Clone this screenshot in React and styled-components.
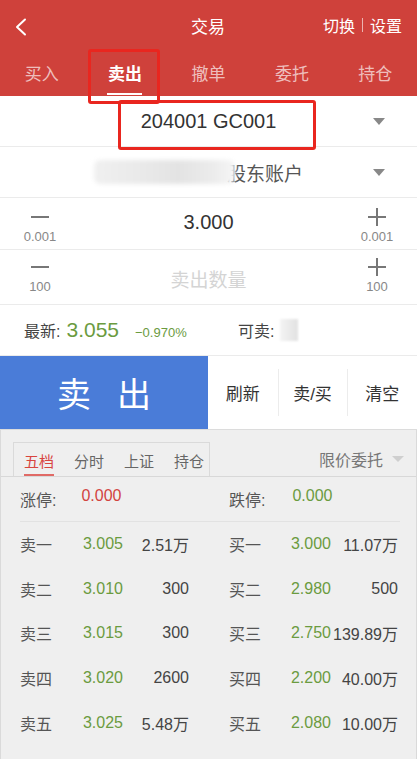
import React from 'react'
import styled, { createGlobalStyle } from 'styled-components'

const GlobalStyle = createGlobalStyle`
  html, body { margin: 0; padding: 0; background: #efefef; }
  body {
    font-family: "Liberation Sans", "Noto Sans CJK SC", sans-serif;
    -webkit-font-smoothing: antialiased;
  }
  * { box-sizing: border-box; }
`

const GREEN = '#6b9b3f'
const RED = '#d2433f'

const Page = styled.div`
  position: relative;
  width: 417px;
  height: 759px;
  overflow: hidden;
  background: #efefef;
  display: flex;
  flex-direction: column;
`

const Header = styled.div`
  background: #cf413b;
  height: 96px;
  display: flex;
  flex-direction: column;
  color: #fff;
`

const TopBar = styled.div`
  height: 50px;
  display: grid;
  grid-template-columns: 1fr auto 1fr;
  align-items: center;
  padding: 0 15px 0 14px;
  svg { display: block; margin-top: 4px; }
`

const Title = styled.div`
  font-size: 17px;
  text-align: center;
`

const RightLinks = styled.div`
  justify-self: end;
  font-size: 16px;
  display: flex;
  align-items: center;
  gap: 7px;
  span.sep {
    width: 1px;
    height: 14px;
    background: rgba(255,255,255,0.6);
  }
`

const Tabs = styled.div`
  flex: 1;
  display: grid;
  grid-template-columns: repeat(5, 1fr);
`

const Tab = styled.div`
  position: relative;
  display: flex;
  align-items: center;
  justify-content: center;
  padding-bottom: 2px;
  font-size: 17px;
  font-weight: ${p => (p.$active ? 700 : 400)};
  color: ${p => (p.$active ? '#fff' : 'rgba(255,255,255,0.68)')};
  &::after {
    content: '';
    display: ${p => (p.$active ? 'block' : 'none')};
    position: absolute;
    bottom: 1px;
    left: 50%;
    width: 35px;
    margin-left: -18px;
    height: 2px;
    background: #fff;
  }
`

const Form = styled.div`
  background: #fff;
`

const Row = styled.div`
  height: ${p => p.$h}px;
  border-bottom: 1px solid #ebebeb;
  display: flex;
  align-items: center;
  justify-content: center;
  position: relative;
  color: #333;
`

const SelectRow = styled(Row)`
  padding-right: 24px;
`

const CodeText = styled.div`
  font-size: 20px;
  color: #333;
  margin-left: 24px;
`

const Caret = styled.div`
  position: absolute;
  right: 32px;
  top: 50%;
  margin-top: -3px;
  width: 0;
  height: 0;
  border-left: 6px solid transparent;
  border-right: 6px solid transparent;
  border-top: 7px solid #888;
`

const AccountText = styled.div`
  display: flex;
  align-items: center;
  font-size: 19px;
  color: #555;
  margin-left: 4px;
`

const Blur = styled.div`
  width: 141px;
  height: 24px;
  margin-right: -8px;
  border-radius: 6px;
  background: linear-gradient(90deg, #f0f0f0 0%, #e8e8e8 40%, #e3e3e3 60%, #ececec 85%, #f6f6f6 100%);
  filter: blur(2px);
  position: relative;
  z-index: 1;
`

const StepRow = styled(Row)`
  justify-content: space-between;
  padding: 0 22px;
`

const Stepper = styled.div`
  width: 36px;
  display: flex;
  flex-direction: column;
  align-items: center;
  gap: 2px;
  margin-top: ${p => p.$mt || 0}px;
  svg { display: block; }
`

const StepLabel = styled.div`
  font-size: 13px;
  color: #888;
`

const MidValue = styled.div`
  font-size: ${p => p.$size}px;
  color: ${p => p.$color};
  margin-top: ${p => p.$mt || 0}px;
`

const InfoRow = styled(Row)`
  justify-content: flex-start;
  padding-left: 24px;
  font-size: 16px;
  color: #444;
`

const InfoItem = styled.div`
  display: flex;
  align-items: baseline;
  width: ${p => p.$w}px;
`

const Price = styled.span`
  color: ${GREEN};
  font-size: 21px;
  margin-left: 6px;
`

const Pct = styled.span`
  color: ${GREEN};
  font-size: 13px;
  margin-left: 16px;
`

const SmallBlur = styled.span`
  display: inline-block;
  width: 18px;
  height: 22px;
  margin-left: 6px;
  background: linear-gradient(90deg, #f4f4f4, #e2e2e2);
  filter: blur(1px);
  align-self: center;
`

const ActionRow = styled.div`
  height: 74px;
  display: flex;
  background: #fff;
  border-bottom: 1px solid #dcdcdc;
`

const SellButton = styled.div`
  width: 208px;
  background: #4a7cd8;
  color: #fff;
  font-size: 34px;
  letter-spacing: 26px;
  padding-left: 26px;
  display: flex;
  align-items: center;
  justify-content: center;
`

const ActionButton = styled.div`
  flex: 1;
  display: flex;
  align-items: center;
  justify-content: center;
  font-size: 17px;
  color: #333;
  position: relative;
  & + &::before {
    content: '';
    position: absolute;
    left: 0;
    top: 13px;
    bottom: 13px;
    width: 1px;
    background: #ececec;
  }
`

const Panel = styled.div`
  flex: 1;
  display: flex;
  flex-direction: column;
  border-left: 1px solid #dadada;
  border-right: 1px solid #dadada;
`

const PanelHead = styled.div`
  height: 47px;
  display: flex;
  align-items: flex-end;
  justify-content: space-between;
  border-bottom: 1px solid #d8d8d8;
  padding-left: 12px;
  padding-right: 12px;
`

const SubTabs = styled.div`
  width: 197px;
  height: 34px;
  border: 1px solid #dadada;
  border-bottom: none;
  display: flex;
  padding-left: 10px;
  gap: 20px;
`

const SubTab = styled.div`
  position: relative;
  font-size: 15px;
  color: ${p => (p.$active ? '#d8453f' : '#666')};
  display: flex;
  align-items: center;
  padding-top: 1px;
  &::after {
    content: '';
    display: ${p => (p.$active ? 'block' : 'none')};
    position: absolute;
    left: 0;
    right: 0;
    bottom: 0;
    height: 2px;
    background: #e06a66;
  }
`

const OrderType = styled.div`
  display: flex;
  align-items: center;
  height: 34px;
  font-size: 16px;
  color: #777;
  gap: 9px;
`

const SmallCaret = styled.span`
  width: 0;
  height: 0;
  border-left: 6px solid transparent;
  border-right: 6px solid transparent;
  border-top: 6px solid #cfcfcf;
`

const Quotes = styled.div`
  padding: 0 16px 0 19px;
`

const LimitRow = styled.div`
  height: 45px;
  display: flex;
  align-items: center;
  border-bottom: 1px solid #e2e2e2;
  font-size: 16px;
  color: #555;
`

const LimitItem = styled.div`
  width: ${p => p.$w}px;
  display: flex;
  span:last-child {
    margin-left: ${p => p.$gap}px;
    color: ${p => p.$color};
  }
`

const Level = styled.div`
  height: 44.6px;
  display: grid;
  grid-template-columns: 53px 60px 56px 40px 52px 50px 67px;
  align-items: center;
  font-size: 16px;
  color: #555;
`

const LevelPrice = styled.div`
  color: ${GREEN};
  text-align: ${p => p.$align};
`

const LevelVol = styled.div`
  text-align: right;
  color: #444;
`

const Annotation = styled.div`
  position: absolute;
  border: 3px solid #e9261f;
  border-radius: 3px;
  pointer-events: none;
`

const Minus = () => (
  <svg width="20" height="20" viewBox="0 0 20 20">
    <path d="M1 10 H19" stroke="#777" strokeWidth="2" />
  </svg>
)

const Plus = () => (
  <svg width="20" height="20" viewBox="0 0 20 20">
    <path d="M1 10 H19 M10 1 V19" stroke="#777" strokeWidth="2" />
  </svg>
)

const levels = [
  ['卖一', '3.005', '2.51万', '买一', '3.000', '11.07万'],
  ['卖二', '3.010', '300', '买二', '2.980', '500'],
  ['卖三', '3.015', '300', '买三', '2.750', '139.89万'],
  ['卖四', '3.020', '2600', '买四', '2.200', '40.00万'],
  ['卖五', '3.025', '5.48万', '买五', '2.080', '10.00万'],
]

export default function App() {
  return (
    <>
      <GlobalStyle />
      <Page>
        <Header>
          <TopBar>
            <svg width="14" height="18" viewBox="0 0 14 18">
              <path d="M11 1.5 L3 9 L11 16.5" fill="none" stroke="#fff" strokeWidth="2" strokeLinecap="round" strokeLinejoin="round" />
            </svg>
            <Title>交易</Title>
            <RightLinks>
              <span>切换</span>
              <span className="sep" />
              <span>设置</span>
            </RightLinks>
          </TopBar>
          <Tabs>
            {['买入', '卖出', '撤单', '委托', '持仓'].map(t => (
              <Tab key={t} $active={t === '卖出'}>{t}</Tab>
            ))}
          </Tabs>
        </Header>

        <Form>
          <SelectRow $h={51}>
            <CodeText>204001 GC001</CodeText>
            <Caret />
          </SelectRow>
          <SelectRow $h={51}>
            <AccountText>
              <Blur />
              <span>股东账户</span>
            </AccountText>
            <Caret />
          </SelectRow>
          <StepRow $h={52}>
            <Stepper $mt={4}>
              <Minus />
              <StepLabel>0.001</StepLabel>
            </Stepper>
            <MidValue $size={20} $color="#333" $mt={-2}>3.000</MidValue>
            <Stepper $mt={4}>
              <Plus />
              <StepLabel>0.001</StepLabel>
            </Stepper>
          </StepRow>
          <StepRow $h={55}>
            <Stepper $mt={-4}>
              <Minus />
              <StepLabel>100</StepLabel>
            </Stepper>
            <MidValue $size={19} $color="#d4d4d4" $mt={2}>卖出数量</MidValue>
            <Stepper $mt={-4}>
              <Plus />
              <StepLabel>100</StepLabel>
            </Stepper>
          </StepRow>
          <InfoRow $h={51}>
            <InfoItem $w={214}>
              最新:<Price>3.055</Price><Pct>−0.970%</Pct>
            </InfoItem>
            <InfoItem $w={100}>
              可卖:<SmallBlur />
            </InfoItem>
          </InfoRow>
        </Form>

        <ActionRow>
          <SellButton>卖出</SellButton>
          <ActionButton>刷新</ActionButton>
          <ActionButton>卖/买</ActionButton>
          <ActionButton>清空</ActionButton>
        </ActionRow>

        <Panel>
          <PanelHead>
            <SubTabs>
              <SubTab $active>五档</SubTab>
              <SubTab>分时</SubTab>
              <SubTab>上证</SubTab>
              <SubTab>持仓</SubTab>
            </SubTabs>
            <OrderType>
              限价委托<SmallCaret />
            </OrderType>
          </PanelHead>
          <Quotes>
            <LimitRow>
              <LimitItem $w={209} $gap={25} $color={RED}>
                <span>涨停:</span><span>0.000</span>
              </LimitItem>
              <LimitItem $w={150} $gap={27} $color={GREEN}>
                <span>跌停:</span><span>0.000</span>
              </LimitItem>
            </LimitRow>
            {levels.map(l => (
              <Level key={l[0]}>
                <div>{l[0]}</div>
                <LevelPrice $align="center">{l[1]}</LevelPrice>
                <LevelVol>{l[2]}</LevelVol>
                <div />
                <div>{l[3]}</div>
                <LevelPrice $align="right">{l[4]}</LevelPrice>
                <LevelVol>{l[5]}</LevelVol>
              </Level>
            ))}
          </Quotes>
        </Panel>

        <Annotation style={{ left: 88, top: 49, width: 72, height: 55 }} />
        <Annotation style={{ left: 118, top: 100, width: 198, height: 50 }} />
      </Page>
    </>
  )
}
